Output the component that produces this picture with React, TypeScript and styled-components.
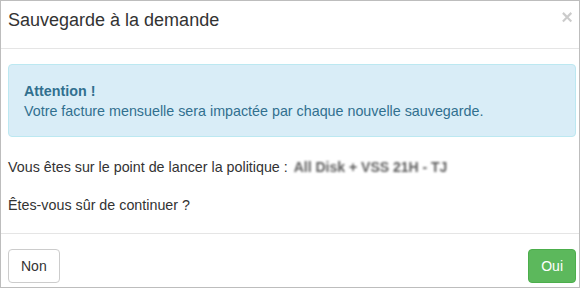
import React from 'react';
import styled, { createGlobalStyle } from 'styled-components';

const GlobalStyle = createGlobalStyle`
  html, body {
    margin: 0;
    padding: 0;
    background: #ffffff;
  }
  body {
    font-family: 'Liberation Sans', Arial, sans-serif;
    color: #333333;
  }
`;

const Modal = styled.div`
  box-sizing: border-box;
  width: 580px;
  height: 288px;
  border: 1px solid #bdbdbd;
  display: flex;
  flex-direction: column;
  background: #fff;
`;

const Header = styled.div`
  box-sizing: border-box;
  height: 49px;
  border-bottom: 1px solid #e5e5e5;
  display: flex;
  align-items: flex-start;
  padding: 7px 6px 0 7px;
`;

const Title = styled.h4`
  margin: 0;
  font-size: 18px;
  font-weight: normal;
  line-height: 25.7px;
  color: #333;
`;

const Close = styled.button`
  margin-left: auto;
  margin-top: -1px;
  border: 0;
  background: transparent;
  padding: 0;
  font-family: 'Liberation Sans', Arial, sans-serif;
  font-size: 20px;
  font-weight: bold;
  line-height: 1;
  color: #000;
  opacity: 0.2;
`;

const Body = styled.div`
  flex: 1;
  padding: 15px 3px 0 7px;
  font-size: 14.3px;
  line-height: 20px;
`;

const Alert = styled.div`
  box-sizing: border-box;
  height: 73px;
  padding: 16px 15px 15px;
  background: #d9edf7;
  border: 1px solid #bce8f1;
  border-radius: 4px;
  color: #31708f;
  margin-bottom: 20px;
`;

const AlertTitle = styled.strong`
  display: block;
`;

const Para = styled.p`
  margin: 0 0 18px;
`;

const Blurred = styled.span`
  color: #5e5e5e;
  filter: blur(1.3px);
  font-weight: bold;
  font-size: 14px;
  margin-left: 2px;
`;

const Footer = styled.div`
  box-sizing: border-box;
  height: 55px;
  border-top: 1px solid #e5e5e5;
  display: flex;
  justify-content: space-between;
  align-items: flex-start;
  padding: 15px 3px 0 7px;
`;

const Button = styled.button<{ $variant?: 'default' | 'success' }>`
  height: 34px;
  padding: 0 12px;
  font-family: 'Liberation Sans', Arial, sans-serif;
  font-size: 14px;
  border-radius: 4px;
  border: 1px solid ${p => (p.$variant === 'success' ? '#4cae4c' : '#cccccc')};
  background: ${p => (p.$variant === 'success' ? '#5cb85c' : '#ffffff')};
  color: ${p => (p.$variant === 'success' ? '#ffffff' : '#333333')};
`;

export default function App() {
  return (
    <>
      <GlobalStyle />
      <Modal>
        <Header>
          <Title>Sauvegarde à la demande</Title>
          <Close aria-label="Fermer">×</Close>
        </Header>
        <Body>
          <Alert>
            <AlertTitle>Attention !</AlertTitle>
            Votre facture mensuelle sera impactée par chaque nouvelle sauvegarde.
          </Alert>
          <Para>
            Vous êtes sur le point de lancer la politique : <Blurred>All Disk + VSS 21H - TJ</Blurred>
          </Para>
          <Para>Êtes-vous sûr de continuer ?</Para>
        </Body>
        <Footer>
          <Button>Non</Button>
          <Button $variant="success">Oui</Button>
        </Footer>
      </Modal>
    </>
  );
}
